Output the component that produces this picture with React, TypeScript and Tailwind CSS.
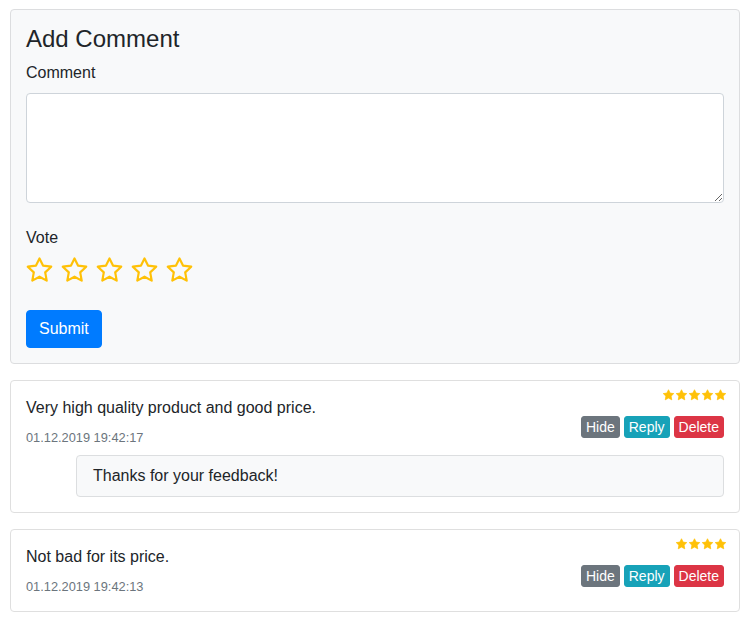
import { useState } from 'react';

interface Comment {
  id: number;
  text: string;
  date: string;
  rating: number;
  reply?: string;
}

const comments: Comment[] = [
  { id: 1, text: 'Very high quality product and good price.', date: '01.12.2019 19:42:17', rating: 5, reply: 'Thanks for your feedback!' },
  { id: 2, text: 'Not bad for its price.', date: '01.12.2019 19:42:13', rating: 4 },
];

function OutlineStar() {
  return (
    <svg width="27" height="26" viewBox="0 0 27 26" className="block">
      <polygon
        points="13.5,1.4 17,8.6 25.2,9.7 19.2,15.4 20.7,23.6 13.5,19.7 6.3,23.6 7.8,15.4 1.8,9.7 10,8.6"
        fill="none"
        stroke="#ffc107"
        strokeWidth="2.2"
        strokeLinejoin="round"
      />
    </svg>
  );
}

function SolidStar() {
  return (
    <svg width="13" height="12" viewBox="0 0 24 24" className="block">
      <polygon
        points="12,1.5 15.2,8.2 22.5,9.2 17.2,14.3 18.5,21.6 12,18.1 5.5,21.6 6.8,14.3 1.5,9.2 8.8,8.2"
        fill="#ffc107"
        stroke="#ffc107"
        strokeWidth="1.5"
        strokeLinejoin="round"
      />
    </svg>
  );
}

function CommentCard({ c }: { c: Comment }) {
  return (
    <div className="bg-white border border-[#dfdfdf] rounded-[4px] p-[15px]">
      <div className="flex justify-between">
        <div>
          <p className="text-[16px] leading-[24px]">{c.text}</p>
          <p className="mt-[8px] text-[12.8px] leading-[19.2px] text-[#6c757d]">{c.date}</p>
        </div>
        <div className="flex flex-col items-end -mt-[7px]">
          <div className="flex -mr-[3px] h-[12px]">
            {Array.from({ length: c.rating }).map((_, i) => (
              <SolidStar key={i} />
            ))}
          </div>
          <div className="flex gap-[4px] mt-[15px] text-[14px] leading-[20px] text-white">
            <button className="px-[4px] rounded-[3px] border border-[#6c757d] bg-[#6c757d]">Hide</button>
            <button className="px-[4px] rounded-[3px] border border-[#17a2b8] bg-[#17a2b8]">Reply</button>
            <button className="px-[4px] rounded-[3px] border border-[#dc3545] bg-[#dc3545]">Delete</button>
          </div>
        </div>
      </div>
      {c.reply && (
        <div className="ml-[50px] mt-[8px] bg-[#f8f9fa] border border-[#dcdee0] rounded-[4px] px-[16px] py-[8px] text-[16px] leading-[24px]">
          {c.reply}
        </div>
      )}
    </div>
  );
}

export default function App() {
  const [text, setText] = useState('');

  return (
    <div className="pl-[10px] pr-[11px] pt-[9px] text-[#212529] font-['Liberation_Sans',Arial,sans-serif]">
      <div className="bg-[#f8f9fa] border border-[#dcdddf] rounded-[4px] p-[15px]">
        <h4 className="text-[24px] leading-[28.8px]">Add Comment</h4>
        <label className="block mt-[7px] text-[16px] leading-[24px]">Comment</label>
        <textarea
          value={text}
          onChange={(e) => setText(e.target.value)}
          className="block w-full h-[110px] mt-[8px] bg-white border border-[#ced4da] rounded-[4px] px-3 py-1.5 outline-none"
        />
        <label className="block mt-[23px] text-[16px] leading-[24px]">Vote</label>
        <div className="flex gap-[8px] mt-[7px]">
          {[0, 1, 2, 3, 4].map((i) => (
            <OutlineStar key={i} />
          ))}
        </div>
        <button className="mt-[27px] px-[12px] py-[6px] text-[16px] leading-[24px] text-white bg-[#007bff] border border-[#007bff] rounded-[4px]">
          Submit
        </button>
      </div>

      <div className="mt-[16px] flex flex-col gap-[16px]">
        {comments.map((c) => (
          <CommentCard key={c.id} c={c} />
        ))}
      </div>
    </div>
  );
}
